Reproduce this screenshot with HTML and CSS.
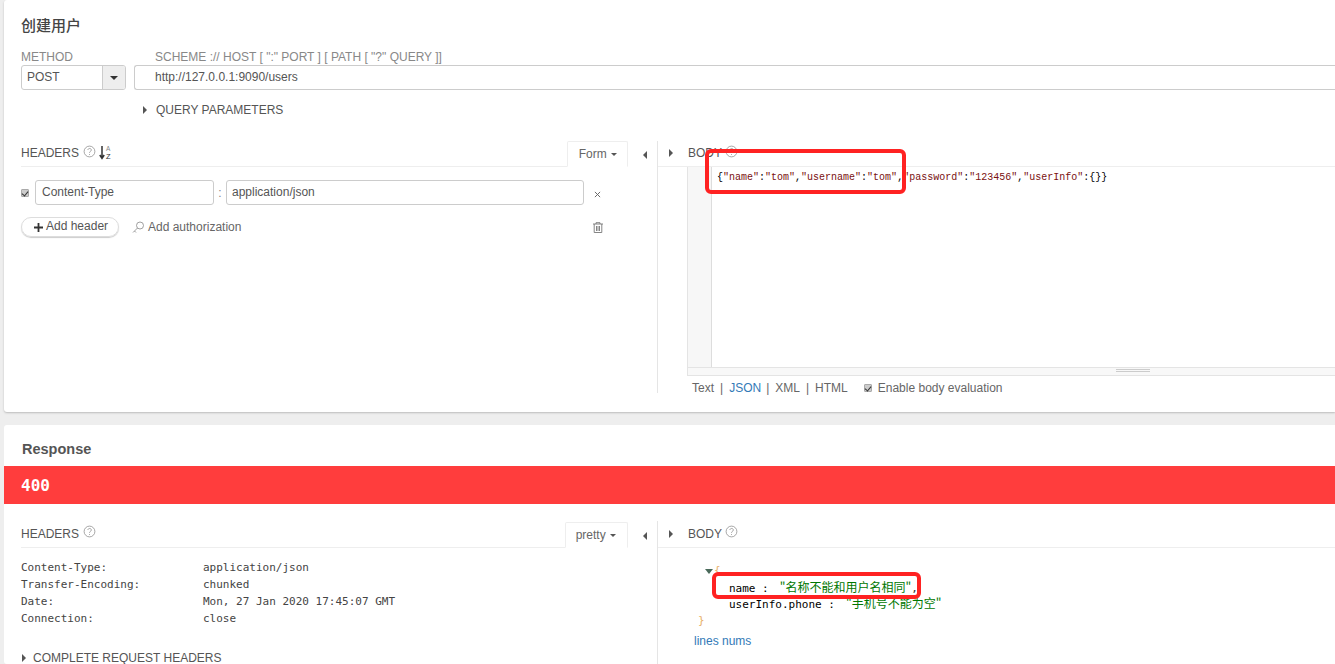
FILE: index.html
```html
<!DOCTYPE html>
<html lang="zh">
<head>
<meta charset="utf-8">
<title>创建用户</title>
<link rel="stylesheet" href="styles.css">
</head>
<body>
<main class="page">
  <section class="card request">
    <h2 class="title">创建用户</h2>
    <div class="endpoint">
      <div class="method-col">
        <div class="label">METHOD</div>
        <div class="select"><span class="select-value">POST</span><span class="select-btn"><i class="caret"></i></span></div>
      </div>
      <div class="url-col">
        <div class="label url-label">SCHEME :// HOST [ ":" PORT ] [ PATH [ "?" QUERY ]]</div>
        <div class="url-input">http://127.0.0.1:9090/users</div>
      </div>
    </div>
    <div class="query"><i class="tri"></i>QUERY PARAMETERS</div>
    <div class="panes req-panes">
      <div class="pane-left">
        <div class="pane-head">
          <span class="head-text">HEADERS</span>
          <svg class="help" viewBox="0 0 14 14"><circle cx="7" cy="7" r="5.8"/><path d="M5.2 5.4c.2-2.2 3.800-2.200 3.800 0 0 1.500-2 1.400-2 3M7 9.700v1"/></svg>
          <svg class="sort" viewBox="0 0 12 15"><path class="sort-arrow" d="M3 1v12M.8 10l2.200 3.400L5.200 10"/><text x="7" y="6" class="sort-a">A</text><text x="7" y="14" class="sort-z">Z</text></svg>
          <span class="tab">Form <i class="caret small"></i></span>
        </div>
        <div class="header-row">
          <span class="check"></span>
          <span class="field key">Content-Type</span>
          <span class="colon">:</span>
          <span class="field value">application/json</span>
          <svg class="x" viewBox="0 0 8 8"><path d="M1 1l6 6M7 1L1 7"/></svg>
        </div>
        <div class="action-row">
          <span class="add-btn"><svg class="plus" viewBox="0 0 10 10"><path d="M5 0v10M0 5h10"/></svg><span class="add-label">Add header</span></span>
          <svg class="key-icon" viewBox="0 0 12 13"><circle cx="8" cy="4.500" r="3.500"/><path d="M5.500 7L1 11.500M2.500 10l1.500 1.500"/></svg>
          <span class="auth">Add authorization</span>
          <svg class="trash" viewBox="0 0 10 11"><path d="M0 2h10M3 2V.7h4V2M1.200 2v8.500h7.600V2M3.500 4v5M5 4v5M6.500 4v5"/></svg>
        </div>
      </div>
      <div class="collapsers"><i class="tri left"></i></div>
      <div class="pane-right">
        <div class="pane-head body-head">
          <i class="tri"></i><span class="head-text">BODY</span>
          <svg class="help" viewBox="0 0 14 14"><circle cx="7" cy="7" r="5.800"/><path d="M5.200 5.400c.2-2.200 3.800-2.200 3.800 0 0 1.500-2 1.400-2 3M7 9.700v1"/></svg>
        </div>
        <div class="editor">
          <div class="editor-main">
            <div class="gutter"></div>
            <div class="code"><span class="pn">{</span><span class="st">"name"</span><span class="pn">:</span><span class="st">"tom"</span><span class="pn">,</span><span class="st">"username"</span><span class="pn">:</span><span class="st">"tom"</span><span class="pn">,</span><span class="st">"password"</span><span class="pn">:</span><span class="st">"123456"</span><span class="pn">,</span><span class="st">"userInfo"</span><span class="pn">:{}}</span></div>
          </div>
          <div class="resizer"><span class="grip"></span></div>
        </div>
        <div class="formats">
          <span>Text</span><span class="sep">|</span><span class="active">JSON</span><span class="sep">|</span><span>XML</span><span class="sep">|</span><span>HTML</span>
          <span class="check eval-check"></span><span>Enable body evaluation</span>
        </div>
      </div>
    </div>
  </section>

  <section class="card response">
    <h2 class="resp-title">Response</h2>
    <div class="status">400</div>
    <div class="panes resp-panes">
      <div class="pane-left">
        <div class="pane-head resp-head">
          <span class="head-text">HEADERS</span>
          <svg class="help" viewBox="0 0 14 14"><circle cx="7" cy="7" r="5.800"/><path d="M5.200 5.400c.2-2.200 3.800-2.200 3.800 0 0 1.500-2 1.400-2 3M7 9.700v1"/></svg>
          <span class="tab">pretty <i class="caret small"></i></span>
        </div>
        <dl class="resp-headers">
          <dt>Content-Type:</dt><dd>application/json</dd>
          <dt>Transfer-Encoding:</dt><dd>chunked</dd>
          <dt>Date:</dt><dd>Mon, 27 Jan 2020 17:45:07 GMT</dd>
          <dt>Connection:</dt><dd>close</dd>
        </dl>
        <div class="complete"><i class="tri"></i>COMPLETE REQUEST HEADERS</div>
      </div>
      <div class="collapsers"><i class="tri left"></i></div>
      <div class="pane-right">
        <div class="pane-head resp-head body-head">
          <i class="tri"></i><span class="head-text">BODY</span>
          <svg class="help" viewBox="0 0 14 14"><circle cx="7" cy="7" r="5.800"/><path d="M5.200 5.400c.2-2.200 3.800-2.200 3.800 0 0 1.500-2 1.400-2 3M7 9.700v1"/></svg>
        </div>
        <div class="json">
          <div class="json-open"><i class="tri down"></i><span class="brace">{</span></div>
          <div class="json-line"><span class="json-key">name :</span><span class="json-val">"名称不能和用户名相同"</span><span class="json-comma">,</span></div>
          <div class="json-line"><span class="json-key">userInfo.phone :</span><span class="json-val">"手机号不能为空"</span></div>
          <div class="json-close"><span class="brace">}</span></div>
        </div>
        <div class="lines">lines nums</div>
      </div>
    </div>
  </section>
</main>
<div class="mark mark-a"></div>
<div class="mark mark-b"></div>
</body>
</html>
```
FILE: styles.css
```css
* { box-sizing: border-box; }
html, body { margin: 0; height: 664px; overflow: hidden; }
body {
  background: #eee;
  font-family: "Liberation Sans", Arial, "Noto Sans CJK SC", sans-serif;
  font-size: 12px;
  color: #555;
  position: relative;
}
.page { padding-left: 4px; width: 1335px; height: 664px; overflow: hidden; }
.card { background: #fff; border-radius: 3px 0 0 3px; }
.request { height: 412px; padding: 16px 0 0 17px; box-shadow: 0 1px 2px #bbb; margin-bottom: 13px; }
.response { height: 239px; padding-top: 16px; overflow: hidden; }
.title { margin: 0 0 15px; font-size: 15px; line-height: 18px; font-weight: 500; color: #444; font-family: "Noto Sans CJK SC", sans-serif; }
.endpoint { display: flex; gap: 8px; }
.method-col { width: 105px; }
.url-col { flex: 1; }
.label { color: #888; line-height: 16px; height: 16px; }
.url-label { padding-left: 21px; }
.select { display: flex; height: 25px; border: 1px solid #ccc; border-radius: 3px; overflow: hidden; color: #555; }
.select-value { flex: 1; padding-left: 5px; line-height: 22px; }
.select-btn { width: 23px; background: #eee; border-left: 1px solid #ccc; display: flex; align-items: center; justify-content: center; }
.caret { display: block; width: 0; height: 0; border-left: 4px solid transparent; border-right: 4px solid transparent; border-top: 4px solid #333; }
.caret.small { display: inline-block; vertical-align: middle; border-left-width: 3px; border-right-width: 3px; border-top-width: 3px; border-top-color: #555; margin-left: 1px; }
.url-input { height: 25px; border: 1px solid #ccc; border-right: 0; border-radius: 3px 0 0 3px; padding-left: 20px; line-height: 22px; color: #555; }
.tri { display: inline-block; width: 0; height: 0; border-top: 4px solid transparent; border-bottom: 4px solid transparent; border-left: 4px solid #555; flex: none; }
.tri.left { border-left: 0; border-right: 4px solid #555; }
.tri.down { border: 0; border-left: 4px solid transparent; border-right: 4px solid transparent; border-top: 5px solid #4a6a5a; }
.query { margin: 12px 0 0 122px; height: 16px; line-height: 16px; display: flex; align-items: center; gap: 9px; color: #555; }
.panes { display: flex; }
.req-panes { margin-top: 23px; height: 252px; }
.pane-left { width: 607px; }
.pane-head { display: flex; align-items: center; height: 26px; padding-bottom: 2px; border-bottom: 1px solid #eee; position: relative; }
.head-text { font-size: 12px; color: #555; }
.help { width: 13px; height: 13px; margin: -3px 0 0 4px; fill: none; stroke: #888; stroke-width: .8; flex: none; }
.sort { width: 12px; height: 15px; margin-left: 3px; }
.sort-arrow { fill: none; stroke: #333; stroke-width: 1.500; }
.sort-a { font-size: 6.500px; fill: #888; font-family: "Liberation Sans", sans-serif; }
.sort-z { font-size: 7.500px; fill: #333; font-family: "Liberation Sans", sans-serif; }
.tab { margin-left: auto; align-self: flex-end; height: 26px; margin-bottom: -3px; padding: 0 10px 0 11px; border: 1px solid #eee; border-bottom-color: #fff; border-radius: 2px 2px 0 0; line-height: 24px; color: #666; background: #fff; }
.header-row { display: flex; align-items: center; margin-top: 13px; height: 25px; }
.check { width: 8px; height: 8px; background: #ccc; border: 1px solid #aaa; border-radius: 1px; position: relative; flex: none; }
.check::after { content: ""; position: absolute; left: 1px; top: 0; width: 3px; height: 5px; border-right: 1.500px solid #333; border-bottom: 1.500px solid #333; transform: rotate(40deg); }
.field { display: block; height: 25px; border: 1px solid #ccc; border-radius: 3px; line-height: 22px; padding-left: 6px; color: #555; }
.key { width: 179px; margin-left: 6px; }
.colon { width: 12px; text-align: center; color: #888; }
.value { width: 358px; padding-left: 5px; }
.x { width: 7px; height: 7px; margin: 3px 0 0 10px; fill: none; stroke: #666; stroke-width: 1.100; }
.action-row { display: flex; align-items: center; margin-top: 12px; height: 20px; }
.add-btn { display: flex; align-items: center; gap: 3px; width: 98px; height: 20px; padding-left: 12px; border: 1px solid #ddd; border-radius: 10px; box-shadow: 0 1px 1px #ccc; color: #555; line-height: 16px; }
.add-label { margin-top: -2px; }
.plus { width: 9px; height: 9px; fill: none; stroke: #333; stroke-width: 2; }
.key-icon { width: 12px; height: 13px; margin-left: 13px; fill: none; stroke: #888; stroke-width: .8; }
.auth { margin-left: 4px; color: #666; }
.trash { width: 10px; height: 11px; margin-left: auto; margin-right: 25px; fill: none; stroke: #777; stroke-width: .9; }
.collapsers { width: 30px; border-right: 1px solid #e5e5e5; padding: 7px 0 0 15px; }
.pane-right { flex: 1; min-width: 0; }
.body-head { padding-left: 11px; }
.body-head .head-text { margin-left: 15px; }
.body-head .help { margin-left: 3px; }
.editor { margin-left: 29px; border: 1px solid #e4e4e4; border-right: 0; border-top: 0; height: 209px; display: flex; flex-direction: column; }
.editor-main { flex: 1; display: flex; }
.gutter { width: 24px; background: #f7f7f7; border-right: 1px solid #ddd; }
.code { padding: 5px 0 0 5px; font-family: "Liberation Mono", monospace; font-size: 10px; line-height: 12px; white-space: nowrap; }
.st { color: #7a1010; }
.pn { color: #000; }
.resizer { height: 8px; background: #f8f8f8; border-top: 1px solid #e4e4e4; display: flex; justify-content: flex-end; }
.grip { width: 34px; height: 3px; margin: 1px 185px 0 0; border-top: 1px solid #ccc; border-bottom: 1px solid #ccc; }
.formats { margin-left: 34px; height: 24px; display: flex; align-items: center; gap: 6px; color: #666; }
.formats .active { color: #337ab7; margin-right: -1px; }
.eval-check { margin-left: 10px; }
.resp-title { margin: 0 0 9px 18px; font-size: 14.500px; line-height: 16px; font-weight: 700; color: #555; }
.status { height: 38px; background: #ff3d3d; color: #fff; padding-left: 17px; font-family: "DejaVu Sans Mono", monospace; font-size: 16px; font-weight: 700; line-height: 39px; }
.resp-panes { margin: 17px 0 0 17px; }
.resp-head { height: 27px; padding-bottom: 0; }
.resp-head .help { margin-top: -5px; }
.resp-head .tab { padding: 0 11px 0 10px; margin-bottom: -1px; }
.resp-panes .collapsers { padding-top: 8px; height: 200px; }
.resp-headers { margin: 11px 0 0; display: grid; grid-template-columns: 182px 1fr; font-family: "DejaVu Sans Mono", monospace; font-size: 11px; line-height: 17px; color: #444; }
.resp-headers dt, .resp-headers dd { margin: 0; white-space: nowrap; }
.complete { margin-top: 23px; display: flex; align-items: center; gap: 7px; line-height: 16px; padding-left: 1px; color: #555; }
.json { margin: 15px 0 0 29px; padding-left: 8px; font-family: "DejaVu Sans Mono", "Noto Sans CJK SC", monospace; font-size: 11px; line-height: 16px; }
.json-open { height: 16px; display: flex; align-items: center; gap: 1px; padding-left: 10px; }
.brace { color: #e8b06a; }
.json-line { height: 16px; padding-left: 34px; white-space: nowrap; }
.json-key { color: #000; }
.json-val { color: #070; font-family: "Noto Sans CJK SC", sans-serif; font-size: 12px; line-height: 16px; margin-left: 11px; }
.json-comma { color: #333; }
.json-close { height: 16px; padding: 2px 0 0 3px; }
.lines { margin: 6px 0 0 36px; color: #337ab7; line-height: 16px; }
.mark { position: absolute; border: 4px solid #f22; border-radius: 6px; }
.mark-a { left: 705px; top: 149px; width: 201px; height: 45px; }
.mark-b { left: 712px; top: 572px; width: 209px; height: 27px; }
```
